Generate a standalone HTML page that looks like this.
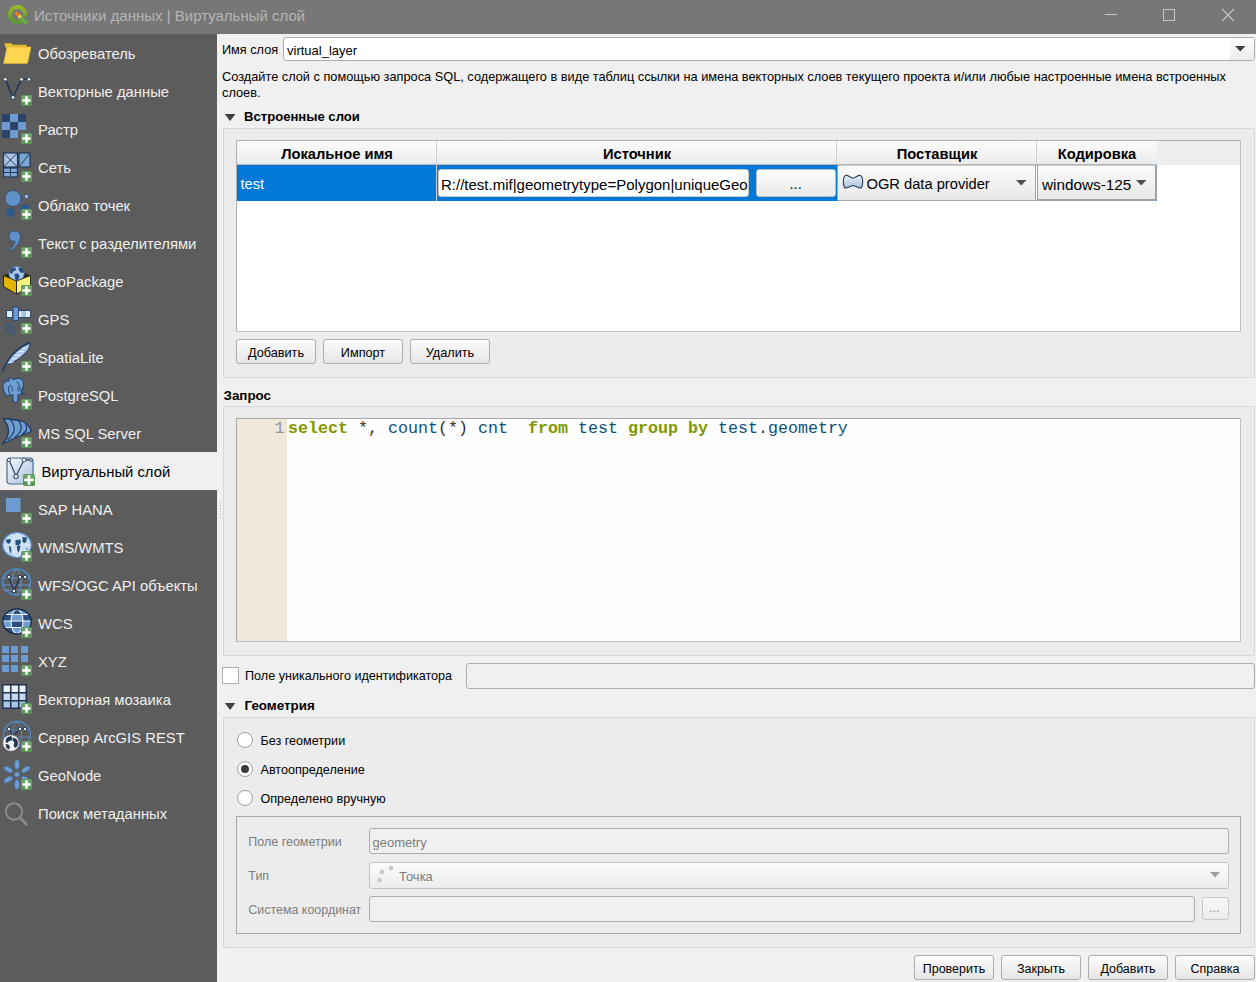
<!DOCTYPE html><html><head><meta charset="utf-8"><style>
html,body{margin:0;padding:0;width:1256px;height:982px;overflow:hidden;background:#f0f0f0;position:relative;font-family:"Liberation Sans",sans-serif;}
.t{position:absolute;white-space:nowrap;}
svg{position:absolute;}
</style></head><body>
<div style="position:absolute;left:0px;top:0px;width:1256px;height:34px;box-sizing:border-box;background:#777777"></div>
<svg style="left:0px;top:0px" width="34" height="34" viewBox="0 0 34 34"><defs><linearGradient id="qg" x1="0" y1="0" x2="0" y2="1"><stop offset="0" stop-color="#93b823"/><stop offset="1" stop-color="#5a9a30"/></linearGradient></defs><path d="M21.4 21.2A7.6 7.6 0 1 1 24.9 16.6" fill="none" stroke="url(#qg)" stroke-width="3.9"/><path d="M20.2 17L25.8 22.6" stroke="#6aac48" stroke-width="3.6" stroke-linecap="round"/><path d="M16.6 13.4L19.2 16" stroke="#f07a1c" stroke-width="3.4" stroke-linecap="round"/><path d="M18.9 15.7L20.6 17.4" stroke="#e4de50" stroke-width="3.4"/></svg>
<div class="t" style="left:34px;top:7.60px;font-size:15px;line-height:15px;color:#b4b4b4;font-family:'Liberation Sans', sans-serif;">Источники данных | Виртуальный слой</div>
<div style="position:absolute;left:1105px;top:14px;width:12px;height:1px;box-sizing:border-box;background:#c8c8c8"></div>
<div style="position:absolute;left:1163px;top:9px;width:12px;height:12px;box-sizing:border-box;border:1px solid #c8c8c8"></div>
<svg style="left:1221px;top:8px" width="14" height="14" viewBox="0 0 14 14"><path d="M1 1L13 13M13 1L1 13" stroke="#c8c8c8" stroke-width="1.1"/></svg>
<div style="position:absolute;left:0px;top:34px;width:217px;height:948px;box-sizing:border-box;background:#5c5c5c"></div>
<svg style="left:0px;top:34px" width="34" height="38" viewBox="0 0 34 38"><path d="M4.5 9.5h7l1.5 1.5h13.5v3H6z" fill="#e9c23e" stroke="#d4a92c" stroke-width=".6"/><path d="M7 13h24l-3.5 16.5H3.5z" fill="#fdd64f"/><path d="M7 13h24l-3.5 16.5H3.5z" fill="none" stroke="#dcb034" stroke-width=".6"/></svg>
<div class="t" style="left:38px;top:47.07px;font-size:14.8px;line-height:14.8px;color:#efefef;font-family:'Liberation Sans', sans-serif;">Обозреватель</div>
<svg style="left:0px;top:72px" width="34" height="38" viewBox="0 0 34 38"><path d="M5.3 7.3L13 25.3L21.5 7.3L29 7.3" fill="none" stroke="#223858" stroke-width="1.6"/><circle cx="5.3" cy="7.3" r="1.8" fill="#fff" stroke="#223858" stroke-width=".8"/><circle cx="21.5" cy="7.3" r="1.8" fill="#fff" stroke="#223858" stroke-width=".8"/><circle cx="29" cy="7.3" r="1.8" fill="#fff" stroke="#223858" stroke-width=".8"/><circle cx="13" cy="25.3" r="1.8" fill="#fff" stroke="#223858" stroke-width=".8"/><rect x="21" y="23" width="11" height="11" rx="1.6" fill="#5a9558"/><rect x="21.5" y="23.5" width="10" height="4" rx="1" fill="#6aa468"/><path d="M26.5 24.3v8.4M22.3 28.5h8.4" stroke="#fff" stroke-width="2.5"/></svg>
<div class="t" style="left:38px;top:85.07px;font-size:14.8px;line-height:14.8px;color:#efefef;font-family:'Liberation Sans', sans-serif;">Векторные данные</div>
<svg style="left:0px;top:110px" width="34" height="38" viewBox="0 0 34 38"><rect x="2" y="4" width="24" height="24" fill="#6b9bd0"/><rect x="2" y="4" width="8" height="8" fill="#2b4466"/><rect x="18" y="4" width="8" height="8" fill="#2b4466"/><rect x="10" y="12" width="8" height="8" fill="#2b4466"/><rect x="2" y="20" width="8" height="8" fill="#2b4466"/><rect x="18" y="20" width="8" height="8" fill="#5c5c5c"/><rect x="21" y="23" width="11" height="11" rx="1.6" fill="#5a9558"/><rect x="21.5" y="23.5" width="10" height="4" rx="1" fill="#6aa468"/><path d="M26.5 24.3v8.4M22.3 28.5h8.4" stroke="#fff" stroke-width="2.5"/></svg>
<div class="t" style="left:38px;top:123.07px;font-size:14.8px;line-height:14.8px;color:#efefef;font-family:'Liberation Sans', sans-serif;">Растр</div>
<svg style="left:0px;top:148px" width="34" height="38" viewBox="0 0 34 38"><rect x="3.5" y="5" width="14" height="14" fill="#a9c6e8" stroke="#223858" stroke-width="1.2"/><path d="M3.5 5l14 14M17.5 5l-14 14" stroke="#223858" stroke-width="1"/><rect x="19" y="5" width="11" height="14" fill="#7aa6d8" stroke="#223858" stroke-width="1.2"/><path d="M30 5L19 19" stroke="#223858"/><rect x="3.5" y="20" width="14" height="9" fill="#7aa6d8" stroke="#223858" stroke-width="1.2"/><path d="M10.5 20v9M3.5 24.5h14" stroke="#223858" stroke-width="1"/><rect x="21" y="23" width="11" height="11" rx="1.6" fill="#5a9558"/><rect x="21.5" y="23.5" width="10" height="4" rx="1" fill="#6aa468"/><path d="M26.5 24.3v8.4M22.3 28.5h8.4" stroke="#fff" stroke-width="2.5"/></svg>
<div class="t" style="left:38px;top:161.07px;font-size:14.8px;line-height:14.8px;color:#efefef;font-family:'Liberation Sans', sans-serif;">Сеть</div>
<svg style="left:0px;top:186px" width="34" height="38" viewBox="0 0 34 38"><circle cx="13" cy="12.5" r="8" fill="#5f90c8" stroke="#2b4a72" stroke-width=".8"/><circle cx="26.5" cy="10.5" r="2.2" fill="#9bbce0" stroke="#2b4a72" stroke-width=".8"/><circle cx="10.5" cy="26.5" r="4.5" fill="#2e5a8a"/><circle cx="25" cy="23" r="4.8" fill="#2e5a8a"/><rect x="21" y="23" width="11" height="11" rx="1.6" fill="#5a9558"/><rect x="21.5" y="23.5" width="10" height="4" rx="1" fill="#6aa468"/><path d="M26.5 24.3v8.4M22.3 28.5h8.4" stroke="#fff" stroke-width="2.5"/></svg>
<div class="t" style="left:38px;top:199.07px;font-size:14.8px;line-height:14.8px;color:#efefef;font-family:'Liberation Sans', sans-serif;">Облако точек</div>
<svg style="left:0px;top:224px" width="34" height="38" viewBox="0 0 34 38"><path d="M14 7c5 0 7 3 6 8c-1 6-6 10-10 12l-1-1c3-2 6-5 6-9c-3 1-6-1-6-4c0-3 2-6 5-6z" fill="#5f90c8" stroke="#2b4a72" stroke-width=".7"/><rect x="21" y="23" width="11" height="11" rx="1.6" fill="#5a9558"/><rect x="21.5" y="23.5" width="10" height="4" rx="1" fill="#6aa468"/><path d="M26.5 24.3v8.4M22.3 28.5h8.4" stroke="#fff" stroke-width="2.5"/></svg>
<div class="t" style="left:38px;top:237.07px;font-size:14.8px;line-height:14.8px;color:#efefef;font-family:'Liberation Sans', sans-serif;">Текст с разделителями</div>
<svg style="left:0px;top:262px" width="34" height="38" viewBox="0 0 34 38"><path d="M3.5 13.5L16.5 8L30.5 13.5L16.5 19z" fill="#2a2a10"/><circle cx="16.5" cy="12" r="7.6" fill="#a6c6ea" stroke="#4a7ab8" stroke-width=".8"/><g fill="#23507f"><path d="M10 8l3-2.5 3 .5-.5 2.5-2.5 1-1 2.5-2-1z"/><path d="M14.5 12l3-.5 2 2-1 4-2.5 1.5-1-3z"/><path d="M18.5 5.5l3 .5 2.5 3-1 2-2.5-.5-1.5-2z"/></g><path d="M3.5 13.5L16.5 19v13L3.5 24.5z" fill="#e3b400" stroke="#1a1a1a" stroke-width=".9"/><path d="M16.5 19L30.5 13.5v11L16.5 32z" fill="#f9f17e" stroke="#1a1a1a" stroke-width=".9"/><rect x="21" y="23" width="11" height="11" rx="1.6" fill="#5a9558"/><rect x="21.5" y="23.5" width="10" height="4" rx="1" fill="#6aa468"/><path d="M26.5 24.3v8.4M22.3 28.5h8.4" stroke="#fff" stroke-width="2.5"/></svg>
<div class="t" style="left:38px;top:275.07px;font-size:14.8px;line-height:14.8px;color:#efefef;font-family:'Liberation Sans', sans-serif;">GeoPackage</div>
<svg style="left:0px;top:300px" width="34" height="38" viewBox="0 0 34 38"><rect x="6.5" y="10.5" width="6" height="7" fill="#e4ecf6" stroke="#2b4a72" stroke-width="1"/><rect x="17.5" y="10.5" width="13" height="7" fill="#e4ecf6" stroke="#2b4a72" stroke-width="1"/><rect x="21" y="11" width="5" height="6" fill="#a8c6e8"/><rect x="13" y="7" width="5.5" height="13.5" fill="#6b9bd0" stroke="#2b4a72" stroke-width="1"/><path d="M15.5 20.5v3M15.5 28a5 5 0 0 1-5-5M15.5 31a8 8 0 0 1-8-8M15.5 34a11 11 0 0 1-11-11" fill="none" stroke="#2f5688" stroke-width="1.1"/><rect x="21" y="23" width="11" height="11" rx="1.6" fill="#5a9558"/><rect x="21.5" y="23.5" width="10" height="4" rx="1" fill="#6aa468"/><path d="M26.5 24.3v8.4M22.3 28.5h8.4" stroke="#fff" stroke-width="2.5"/></svg>
<div class="t" style="left:38px;top:313.07px;font-size:14.8px;line-height:14.8px;color:#efefef;font-family:'Liberation Sans', sans-serif;">GPS</div>
<svg style="left:0px;top:338px" width="34" height="38" viewBox="0 0 34 38"><path d="M6.5 26C10 17 17 9 30 4.3C30 8 29 11 27.5 12.5C23 18 17 23 7 27z" fill="#a8c6ea" stroke="#1f3a5c" stroke-width="1"/><path d="M2.5 33.3C7 22 15 11 29.5 5" fill="none" stroke="#1f3a5c" stroke-width="1.4"/><path d="M9 24.5l4.5-.5M12 21l5-.8M15 17.5l5.5-.8M18.5 14l5.5-.8M22 10.5l5-.7" stroke="#eaf2fb" stroke-width="1" fill="none"/><rect x="21" y="23" width="11" height="11" rx="1.6" fill="#5a9558"/><rect x="21.5" y="23.5" width="10" height="4" rx="1" fill="#6aa468"/><path d="M26.5 24.3v8.4M22.3 28.5h8.4" stroke="#fff" stroke-width="2.5"/></svg>
<div class="t" style="left:38px;top:351.07px;font-size:14.8px;line-height:14.8px;color:#efefef;font-family:'Liberation Sans', sans-serif;">SpatiaLite</div>
<svg style="left:0px;top:376px" width="34" height="38" viewBox="0 0 34 38"><path d="M9 5C4.5 4.5 2.5 7.5 3 11c.5 4 2.5 8 4.5 9l2-1h3.5v5c0 2 1 2.5 2.5 2.5s2.5-.5 2.5-2.5v-5l2-1h4l-3-2c1-2 2.5-5 2.5-8c0-4-2.5-5.5-5-5.5c-2 0-3.5.5-4.5 1c-1.5-1-3-1.5-5-1.5z" fill="#6d9dd2" stroke="#24466e" stroke-width="1.1"/><path d="M9.5 9.5c-1.5 3-1.5 6 .5 8.5M9.5 9.5c2-1 3 2 2.5 6M16.5 5.5c2.5 2 3.5 5 3.5 9M17.5 11c1 1.5 1 3 .5 4.5" stroke="#24466e" stroke-width="1" fill="none"/><rect x="21" y="23" width="11" height="11" rx="1.6" fill="#5a9558"/><rect x="21.5" y="23.5" width="10" height="4" rx="1" fill="#6aa468"/><path d="M26.5 24.3v8.4M22.3 28.5h8.4" stroke="#fff" stroke-width="2.5"/></svg>
<div class="t" style="left:38px;top:389.07px;font-size:14.8px;line-height:14.8px;color:#efefef;font-family:'Liberation Sans', sans-serif;">PostgreSQL</div>
<svg style="left:0px;top:414px" width="34" height="38" viewBox="0 0 34 38"><path d="M3 4.5C11 5 18 6 23 7.5C27 9 30 13 31.5 17.5C22 21 12 25 2.5 30C6 26 8.5 21 8.5 17C8.5 12 6 8 3 4.5z" fill="#6d9dd2" stroke="#1e3a5f" stroke-width="1.3" stroke-linejoin="round"/><path d="M10.5 5.5C13 9 14.5 13 14 16C13.5 20 11 23 7.5 26M18.5 6.8C20.5 9 21.5 12 21 15C20.5 18 18 21 14.5 23.5M25.5 9.2C26.5 11 27 13 26.5 15.5C26 17.5 24 19 22 20.5" stroke="#1e3a5f" stroke-width="1.2" fill="none"/><rect x="21" y="23" width="11" height="11" rx="1.6" fill="#5a9558"/><rect x="21.5" y="23.5" width="10" height="4" rx="1" fill="#6aa468"/><path d="M26.5 24.3v8.4M22.3 28.5h8.4" stroke="#fff" stroke-width="2.5"/></svg>
<div class="t" style="left:38px;top:427.07px;font-size:14.8px;line-height:14.8px;color:#efefef;font-family:'Liberation Sans', sans-serif;">MS SQL Server</div>
<div style="position:absolute;left:0px;top:452px;width:217px;height:38px;box-sizing:border-box;background:#f0f0f0"></div>
<svg style="left:0px;top:452px" width="38" height="38" viewBox="0 0 38 38"><defs><linearGradient id="sg" x1="0" y1="0" x2="1" y2="1"><stop offset="0" stop-color="#f4f8fc"/><stop offset="1" stop-color="#a9c1de"/></linearGradient></defs><rect x="7" y="6" width="26" height="26" rx="3" fill="url(#sg)" stroke="#4a6a90" stroke-width="1.2"/><path d="M9 8L16 24L24 8L31 8" fill="none" stroke="#3a5270" stroke-width="1.3"/><circle cx="16" cy="24.5" r="2.2" fill="#fff" stroke="#3a5270" stroke-width="1.1"/><circle cx="24" cy="8" r="2" fill="#fff" stroke="#3a5270" stroke-width="1"/><circle cx="9" cy="8" r="1.6" fill="#fff" stroke="#3a5270" stroke-width="1"/><circle cx="31" cy="8" r="1.4" fill="#fff" stroke="#3a5270" stroke-width="1"/><rect x="23" y="22" width="12" height="12" rx="1.8" fill="#5a9558"/><rect x="23.5" y="22.5" width="11" height="4.5" rx="1" fill="#6aa468"/><path d="M29 23.2v9.6M24.2 28h9.6" stroke="#fff" stroke-width="2.7"/></svg>
<div class="t" style="left:41.5px;top:465.07px;font-size:14.8px;line-height:14.8px;color:#000;font-family:'Liberation Sans', sans-serif;">Виртуальный слой</div>
<svg style="left:0px;top:490px" width="34" height="38" viewBox="0 0 34 38"><rect x="6" y="8" width="14.5" height="14" fill="#6b9bd0"/><path d="M2.5 4.5h21.5M2.5 25.5h21.5M2.5 4.5v21M24 4.5v21" stroke="#3b5f8a" stroke-width="1.3" stroke-dasharray="1.4 2.6" fill="none"/><rect x="21" y="23" width="11" height="11" rx="1.6" fill="#5a9558"/><rect x="21.5" y="23.5" width="10" height="4" rx="1" fill="#6aa468"/><path d="M26.5 24.3v8.4M22.3 28.5h8.4" stroke="#fff" stroke-width="2.5"/></svg>
<div class="t" style="left:38px;top:503.07px;font-size:14.8px;line-height:14.8px;color:#efefef;font-family:'Liberation Sans', sans-serif;">SAP HANA</div>
<svg style="left:0px;top:528px" width="34" height="38" viewBox="0 0 34 38"><ellipse cx="17" cy="17" rx="14.2" ry="12.3" fill="#c8dcf0" stroke="#5a90d0" stroke-width="1.3"/><path d="M6 11h22M3.5 17h27M6 23h22M17 5c-6 5-6 19 0 24M17 5c6 5 6 19 0 24" stroke="#eef4fb" stroke-width=".7" fill="none"/><g fill="#23507f"><path d="M6 11.5l4.5-.5.5 2-2 3-2.5-1.5z"/><path d="M15.5 12l5-.5.5 3-2 2.5h-3.5z"/><path d="M17 17.5h3.5l-1 5.5-1.5 1.5-1-4z"/><path d="M22.5 9l4.5.5-.5 3.5-1.5 2-2.5-1z"/><path d="M9 18l1.5.5 1 4-1.5 3.5-.5-4z"/><path d="M26 20l2 1-1 1.5z"/></g><rect x="21" y="23" width="11" height="11" rx="1.6" fill="#5a9558"/><rect x="21.5" y="23.5" width="10" height="4" rx="1" fill="#6aa468"/><path d="M26.5 24.3v8.4M22.3 28.5h8.4" stroke="#fff" stroke-width="2.5"/></svg>
<div class="t" style="left:38px;top:541.07px;font-size:14.8px;line-height:14.8px;color:#efefef;font-family:'Liberation Sans', sans-serif;">WMS/WMTS</div>
<svg style="left:0px;top:566px" width="34" height="38" viewBox="0 0 34 38"><ellipse cx="16.5" cy="16" rx="14" ry="13" fill="none" stroke="#4a88cc" stroke-width="1.6"/><path d="M3 12h27M3 19h27M3 24h27M16.5 3c-6 5-6 21 0 26M16.5 3c6 5 6 21 0 26" stroke="#6b9bd0" stroke-width=".9" fill="none"/><path d="M9 11l5 14l6-14h5" stroke="#223858" stroke-width="1.4" fill="none"/><circle cx="9" cy="11" r="1.8" fill="#fff" stroke="#223858" stroke-width="1"/><circle cx="20" cy="11" r="1.8" fill="#fff" stroke="#223858" stroke-width="1"/><circle cx="25" cy="11" r="1.8" fill="#fff" stroke="#223858" stroke-width="1"/><circle cx="14" cy="25" r="1.8" fill="#fff" stroke="#223858" stroke-width="1"/><rect x="21" y="23" width="11" height="11" rx="1.6" fill="#5a9558"/><rect x="21.5" y="23.5" width="10" height="4" rx="1" fill="#6aa468"/><path d="M26.5 24.3v8.4M22.3 28.5h8.4" stroke="#fff" stroke-width="2.5"/></svg>
<div class="t" style="left:38px;top:579.07px;font-size:14.8px;line-height:14.8px;color:#efefef;font-family:'Liberation Sans', sans-serif;">WFS/OGC API объекты</div>
<svg style="left:0px;top:604px" width="34" height="38" viewBox="0 0 34 38"><defs><clipPath id="wc"><ellipse cx="17" cy="17.5" rx="14" ry="12.2"/></clipPath><clipPath id="wi"><ellipse cx="17" cy="17.5" rx="6" ry="12.2"/></clipPath></defs><g clip-path="url(#wc)"><path d="M2 4h30v6.5H2z" fill="#6d9dd2"/><path d="M2 10.5h30V17H2z" fill="#2b5080"/><path d="M2 17h30v6.5H2z" fill="#6d9dd2"/><path d="M2 23.5h30V30H2z" fill="#2b5080"/><g clip-path="url(#wi)"><path d="M2 4h30v6.5H2z" fill="#2b5080"/><path d="M2 10.5h30V17H2z" fill="#6d9dd2"/><path d="M2 17h30v6.5H2z" fill="#2b5080"/><path d="M2 23.5h30V30H2z" fill="#6d9dd2"/></g><path d="M5.5 10.5h23M3 17h28M5.5 23.5h23" stroke="#f2f5f8" stroke-width="1.2"/></g><ellipse cx="17" cy="17.5" rx="6" ry="12" fill="none" stroke="#f2f5f8" stroke-width="1.1"/><ellipse cx="17" cy="17.5" rx="14.3" ry="12.5" fill="none" stroke="#172a44" stroke-width="1.3"/><rect x="21" y="23" width="11" height="11" rx="1.6" fill="#5a9558"/><rect x="21.5" y="23.5" width="10" height="4" rx="1" fill="#6aa468"/><path d="M26.5 24.3v8.4M22.3 28.5h8.4" stroke="#fff" stroke-width="2.5"/></svg>
<div class="t" style="left:38px;top:617.07px;font-size:14.8px;line-height:14.8px;color:#efefef;font-family:'Liberation Sans', sans-serif;">WCS</div>
<svg style="left:0px;top:642px" width="34" height="38" viewBox="0 0 34 38"><g fill="#6b9bd0"><rect x="2" y="4" width="7" height="7"/><rect x="11" y="4" width="7" height="7"/><rect x="21" y="4" width="7" height="7"/><rect x="2" y="13" width="7" height="7"/><rect x="11" y="13" width="7" height="7"/><rect x="21" y="13" width="7" height="7"/><rect x="2" y="23" width="7" height="7"/><rect x="11" y="23" width="7" height="7"/></g><rect x="21" y="23" width="11" height="11" rx="1.6" fill="#5a9558"/><rect x="21.5" y="23.5" width="10" height="4" rx="1" fill="#6aa468"/><path d="M26.5 24.3v8.4M22.3 28.5h8.4" stroke="#fff" stroke-width="2.5"/></svg>
<div class="t" style="left:38px;top:655.07px;font-size:14.8px;line-height:14.8px;color:#efefef;font-family:'Liberation Sans', sans-serif;">XYZ</div>
<svg style="left:0px;top:680px" width="34" height="38" viewBox="0 0 34 38"><rect x="2" y="4" width="25" height="25" fill="#1e3350"/><g fill="#eef2f7"><rect x="3.5" y="5.5" width="6.5" height="6.5"/><rect x="11.5" y="5.5" width="6.5" height="6.5"/><rect x="19.5" y="5.5" width="6" height="6.5"/></g><g fill="#c8d8ec"><rect x="3.5" y="13.5" width="6.5" height="6.5"/><rect x="11.5" y="13.5" width="6.5" height="6.5"/><rect x="19.5" y="13.5" width="6" height="6.5"/></g><g fill="#a8c4e6"><rect x="3.5" y="21.5" width="6.5" height="6"/><rect x="11.5" y="21.5" width="6.5" height="6"/><rect x="19.5" y="21.5" width="6" height="6"/></g><rect x="21" y="23" width="11" height="11" rx="1.6" fill="#5a9558"/><rect x="21.5" y="23.5" width="10" height="4" rx="1" fill="#6aa468"/><path d="M26.5 24.3v8.4M22.3 28.5h8.4" stroke="#fff" stroke-width="2.5"/></svg>
<div class="t" style="left:38px;top:693.07px;font-size:14.8px;line-height:14.8px;color:#efefef;font-family:'Liberation Sans', sans-serif;">Векторная мозаика</div>
<svg style="left:0px;top:718px" width="34" height="38" viewBox="0 0 34 38"><ellipse cx="17" cy="16" rx="13.5" ry="12.5" fill="none" stroke="#4a88cc" stroke-width="1.3"/><path d="M4 12h26M4 19h26M17 3.5c-6 5-6 20 0 25M17 3.5c6 5 6 20 0 25" stroke="#5f8fc8" stroke-width=".8" fill="none"/><path d="M9 11l4 7l7-7h5" stroke="#223858" stroke-width="1.3" fill="none"/><circle cx="9" cy="11" r="1.7" fill="#fff" stroke="#223858" stroke-width=".9"/><circle cx="20" cy="11" r="1.7" fill="#fff" stroke="#223858" stroke-width=".9"/><circle cx="25" cy="11" r="1.7" fill="#fff" stroke="#223858" stroke-width=".9"/><circle cx="11" cy="25" r="7.8" fill="#f4f4f4" stroke="#d8d8d8" stroke-width="1" stroke-dasharray="1.2 .6"/><g fill="#1f3550"><path d="M8 19l3-1 1.5 2-1 2.5-2.5.5-1.5 2-2-1 .5-3z"/><path d="M13 19.5l3.5 1.5 1.5 3-.5 4-2.5 2-1.5-2.5 1-3-2-2z"/><path d="M5.5 26l3 .5 1.5 2.5-1 2.5-2.5-1.5z"/></g><rect x="21" y="23" width="11" height="11" rx="1.6" fill="#5a9558"/><rect x="21.5" y="23.5" width="10" height="4" rx="1" fill="#6aa468"/><path d="M26.5 24.3v8.4M22.3 28.5h8.4" stroke="#fff" stroke-width="2.5"/></svg>
<div class="t" style="left:38px;top:731.07px;font-size:14.8px;line-height:14.8px;color:#efefef;font-family:'Liberation Sans', sans-serif;">Сервер ArcGIS REST</div>
<svg style="left:0px;top:756px" width="34" height="38" viewBox="0 0 34 38"><g fill="#6d9dd2" stroke="#3f6ea8" stroke-width=".6"><circle cx="17" cy="18.5" r="2.6"/><ellipse cx="17" cy="8.5" rx="2.4" ry="4.8"/><ellipse cx="17" cy="28.5" rx="2.4" ry="4.8"/><ellipse cx="8.3" cy="13.5" rx="2.4" ry="4.8" transform="rotate(-60 8.3 13.5)"/><ellipse cx="25.7" cy="13.5" rx="2.4" ry="4.8" transform="rotate(60 25.7 13.5)"/><ellipse cx="8.3" cy="23.5" rx="2.4" ry="4.8" transform="rotate(60 8.3 23.5)"/><ellipse cx="25.7" cy="23.5" rx="2.4" ry="4.8" transform="rotate(-60 25.7 23.5)"/></g><rect x="21" y="23" width="11" height="11" rx="1.6" fill="#5a9558"/><rect x="21.5" y="23.5" width="10" height="4" rx="1" fill="#6aa468"/><path d="M26.5 24.3v8.4M22.3 28.5h8.4" stroke="#fff" stroke-width="2.5"/></svg>
<div class="t" style="left:38px;top:769.07px;font-size:14.8px;line-height:14.8px;color:#efefef;font-family:'Liberation Sans', sans-serif;">GeoNode</div>
<svg style="left:0px;top:794px" width="34" height="38" viewBox="0 0 34 38"><circle cx="14" cy="17.5" r="8.2" fill="none" stroke="#8c8c8c" stroke-width="2"/><path d="M20 23.5l6.5 6.8" stroke="#8c8c8c" stroke-width="2.6" stroke-linecap="round"/></svg>
<div class="t" style="left:38px;top:807.07px;font-size:14.8px;line-height:14.8px;color:#efefef;font-family:'Liberation Sans', sans-serif;">Поиск метаданных</div>
<div style="position:absolute;left:220px;top:502px;width:1px;height:1px;box-sizing:border-box;background:#a8a8a8"></div>
<div style="position:absolute;left:220px;top:505px;width:1px;height:1px;box-sizing:border-box;background:#a8a8a8"></div>
<div style="position:absolute;left:220px;top:508px;width:1px;height:1px;box-sizing:border-box;background:#a8a8a8"></div>
<div style="position:absolute;left:220px;top:511px;width:1px;height:1px;box-sizing:border-box;background:#a8a8a8"></div>
<div style="position:absolute;left:220px;top:514px;width:1px;height:1px;box-sizing:border-box;background:#a8a8a8"></div>
<div style="position:absolute;left:220px;top:517px;width:1px;height:1px;box-sizing:border-box;background:#a8a8a8"></div>
<div class="t" style="left:222px;top:44.25px;font-size:12.7px;line-height:12.7px;color:#000;font-family:'Liberation Sans', sans-serif;">Имя слоя</div>
<div style="position:absolute;left:283px;top:37px;width:972px;height:24px;box-sizing:border-box;background:#fff;border:1px solid #adadad;border-radius:3px"></div>
<div style="position:absolute;left:1230px;top:38px;width:24px;height:22px;box-sizing:border-box;background:linear-gradient(#fdfdfd,#ececec);border-radius:0 2px 2px 0"></div>
<svg style="left:1235px;top:46px" width="11" height="6" viewBox="0 0 11 6"><path d="M0 0h10.5L5.25 5.5z" fill="#404040"/></svg>
<div class="t" style="left:287px;top:44.00px;font-size:13px;line-height:13px;color:#000;font-family:'Liberation Sans', sans-serif;">virtual_layer</div>
<div class="t" style="left:222px;top:70.69px;font-size:12.77px;line-height:12.77px;color:#000;font-family:'Liberation Sans', sans-serif;">Создайте слой с помощью запроса SQL, содержащего в виде таблиц ссылки на имена векторных слоев текущего проекта и/или любые настроенные имена встроенных</div>
<div class="t" style="left:222px;top:86.59px;font-size:12.77px;line-height:12.77px;color:#000;font-family:'Liberation Sans', sans-serif;">слоев.</div>
<svg style="left:224px;top:113px" width="12" height="9" viewBox="0 0 12 9"><path d="M0.8 1h10.6L6.1 8z" fill="#404040"/></svg>
<div class="t" style="left:244px;top:109.51px;font-size:13.1px;line-height:13.1px;color:#000;font-weight:bold;font-family:'Liberation Sans', sans-serif;">Встроенные слои</div>
<div style="position:absolute;left:223px;top:128px;width:1032px;height:250px;box-sizing:border-box;background:#ececec;border:1px solid #d6d6d6;border-radius:2px"></div>
<div style="position:absolute;left:236px;top:140px;width:1005px;height:192px;box-sizing:border-box;background:#fff;border:1px solid #b0b0b0;border-right-color:#c0c0c0;border-bottom-color:#c0c0c0"></div>
<div style="position:absolute;left:237px;top:141px;width:1003px;height:24px;box-sizing:border-box;background:#eeeeee;"></div>
<div style="position:absolute;left:237px;top:141px;width:200px;height:24px;box-sizing:border-box;background:linear-gradient(#fcfcfc,#ebebeb);border-right:1px solid #cfcfcf;border-bottom:1px solid #b8b8b8"></div>
<div class="t" style="left:237px;width:200px;top:147.36px;text-align:center;font-size:14.7px;line-height:14.7px;font-weight:bold;color:#000">Локальное имя</div>
<div style="position:absolute;left:437px;top:141px;width:400px;height:24px;box-sizing:border-box;background:linear-gradient(#fcfcfc,#ebebeb);border-right:1px solid #cfcfcf;border-bottom:1px solid #b8b8b8"></div>
<div class="t" style="left:437px;width:400px;top:147.36px;text-align:center;font-size:14.7px;line-height:14.7px;font-weight:bold;color:#000">Источник</div>
<div style="position:absolute;left:837px;top:141px;width:200px;height:24px;box-sizing:border-box;background:linear-gradient(#fcfcfc,#ebebeb);border-right:1px solid #cfcfcf;border-bottom:1px solid #b8b8b8"></div>
<div class="t" style="left:837px;width:200px;top:147.36px;text-align:center;font-size:14.7px;line-height:14.7px;font-weight:bold;color:#000">Поставщик</div>
<div style="position:absolute;left:1037px;top:141px;width:120px;height:24px;box-sizing:border-box;background:linear-gradient(#fcfcfc,#ebebeb);border-bottom:1px solid #b8b8b8"></div>
<div class="t" style="left:1037px;width:120px;top:147.36px;text-align:center;font-size:14.7px;line-height:14.7px;font-weight:bold;color:#000">Кодировка</div>
<div style="position:absolute;left:237px;top:165px;width:600px;height:36px;box-sizing:border-box;background:#0078d7"></div>
<div class="t" style="left:240.5px;top:176.86px;font-size:14.7px;line-height:14.7px;color:#fff;font-family:'Liberation Sans', sans-serif;">test</div>
<div style="position:absolute;left:436px;top:165px;width:1px;height:36px;box-sizing:border-box;background:#d0d0d0"></div>
<div style="position:absolute;left:438px;top:169px;width:311px;height:28px;box-sizing:border-box;background:#fff;border:1px solid #c8c8c8;border-radius:3px;overflow:hidden"><div class="t" style="left:2px;top:6.90px;font-size:15px;line-height:15px;color:#000">R://test.mif|geometrytype=Polygon|uniqueGeometryType=yes</div></div>
<div style="position:absolute;left:756px;top:169px;width:80px;height:28px;box-sizing:border-box;background:linear-gradient(#fdfdfd,#e9e9e9);border:1px solid #bdbdbd;border-radius:3px"></div>
<div class="t" style="left:789.5px;top:177.06px;font-size:14.7px;line-height:14.7px;color:#000;font-family:'Liberation Sans', sans-serif;">...</div>
<div style="position:absolute;left:837px;top:165px;width:199px;height:36px;box-sizing:border-box;background:linear-gradient(#fbfbfb,#e8e8e8);border:1px solid #a9a9a9;border-top-color:#c9c9c9"></div>
<svg style="left:842px;top:174px" width="22" height="16" viewBox="0 0 22 16"><defs><linearGradient id="og" x1="0" y1="0" x2="0" y2="1"><stop offset="0" stop-color="#e8f0f8"/><stop offset="1" stop-color="#a8c0dc"/></linearGradient></defs><path d="M3.5 1.5C6 .8 8 3.5 11 4.2C14 3.5 16 .8 18.5 1.5C21 2.5 21.5 10.5 19.5 13.5C17.5 15.2 14.5 12 11 11.5C7.5 12 4.5 15.2 2.5 13.5C.5 10.5 1 2.5 3.5 1.5z" fill="url(#og)" stroke="#2b3f5c" stroke-width="1.1"/></svg>
<div class="t" style="left:866.5px;top:177.06px;font-size:14.7px;line-height:14.7px;color:#000;font-family:'Liberation Sans', sans-serif;">OGR data provider</div>
<svg style="left:1016px;top:180px" width="11" height="6" viewBox="0 0 11 6"><path d="M0 0h10.5L5.25 5.5z" fill="#505050"/></svg>
<div style="position:absolute;left:1037px;top:165px;width:120px;height:36px;box-sizing:border-box;background:linear-gradient(#fbfbfb,#e8e8e8);border:1px solid #a0a0a0;border-width:1px 2px 2px 1px;border-top-color:#c9c9c9"></div>
<div style="position:absolute;left:1156px;top:165px;width:1px;height:1px;box-sizing:border-box;background:#3a8ee6"></div>
<div style="position:absolute;left:1156px;top:200px;width:1px;height:1px;box-sizing:border-box;background:#3a8ee6"></div>
<div style="position:absolute;left:1037px;top:165px;width:1px;height:1px;box-sizing:border-box;background:#3a8ee6"></div>
<div style="position:absolute;left:1037px;top:200px;width:1px;height:1px;box-sizing:border-box;background:#3a8ee6"></div>
<div style="position:absolute;left:837px;top:165px;width:1px;height:1px;box-sizing:border-box;background:#3a8ee6"></div>
<div style="position:absolute;left:837px;top:200px;width:1px;height:1px;box-sizing:border-box;background:#3a8ee6"></div>
<div style="position:absolute;left:1035px;top:165px;width:1px;height:1px;box-sizing:border-box;background:#3a8ee6"></div>
<div style="position:absolute;left:1035px;top:200px;width:1px;height:1px;box-sizing:border-box;background:#3a8ee6"></div>
<div class="t" style="left:1042px;top:176.55px;font-size:15.3px;line-height:15.3px;color:#000;font-family:'Liberation Sans', sans-serif;">windows-125</div>
<svg style="left:1136px;top:180px" width="11" height="6" viewBox="0 0 11 6"><path d="M0 0h10.5L5.25 5.5z" fill="#505050"/></svg>
<div style="position:absolute;left:236px;top:339px;width:80px;height:25px;box-sizing:border-box;background:linear-gradient(#fcfcfc,#e6e6e6);border:1px solid #adadad;border-radius:3px"></div><div class="t" style="left:236px;width:80px;top:346.55px;text-align:center;font-size:12.7px;line-height:12.7px;color:#000">Добавить</div>
<div style="position:absolute;left:323px;top:339px;width:80px;height:25px;box-sizing:border-box;background:linear-gradient(#fcfcfc,#e6e6e6);border:1px solid #adadad;border-radius:3px"></div><div class="t" style="left:323px;width:80px;top:346.55px;text-align:center;font-size:12.7px;line-height:12.7px;color:#000">Импорт</div>
<div style="position:absolute;left:410px;top:339px;width:80px;height:25px;box-sizing:border-box;background:linear-gradient(#fcfcfc,#e6e6e6);border:1px solid #adadad;border-radius:3px"></div><div class="t" style="left:410px;width:80px;top:346.55px;text-align:center;font-size:12.7px;line-height:12.7px;color:#000">Удалить</div>
<div class="t" style="left:223.5px;top:389.26px;font-size:13.4px;line-height:13.4px;color:#000;font-weight:bold;font-family:'Liberation Sans', sans-serif;">Запрос</div>
<div style="position:absolute;left:223px;top:406px;width:1032px;height:250px;box-sizing:border-box;background:#ececec;border:1px solid #d6d6d6;border-radius:2px"></div>
<div style="position:absolute;left:236px;top:418px;width:1005px;height:224px;box-sizing:border-box;background:#fefefe;border:1px solid #a8a8a8;border-right-color:#c0c0c0;border-bottom-color:#c0c0c0"></div>
<div style="position:absolute;left:237px;top:419px;width:50px;height:222px;box-sizing:border-box;background:#efe8d9"></div>
<div class="t" style="left:274.5px;top:421.19px;font-size:16.67px;line-height:16.67px;color:#8c98a4;font-family:'Liberation Mono', monospace;">1</div>
<div class="t" style="left:288px;top:421.19px;font-size:16.67px;line-height:16.67px;font-family:'Liberation Mono', monospace;white-space:pre"><span style="color:#7f9800;font-weight:bold">select</span> <span style="color:#333333">*,</span> <span style="color:#0d5178">count</span><span style="color:#333333">(*)</span> <span style="color:#0d5178">cnt</span>  <span style="color:#7f9800;font-weight:bold">from</span> <span style="color:#0d5178">test</span> <span style="color:#7f9800;font-weight:bold">group</span> <span style="color:#7f9800;font-weight:bold">by</span> <span style="color:#0d5178">test</span><span style="color:#333333">.</span><span style="color:#0d5178">geometry</span></div>
<div style="position:absolute;left:222px;top:667px;width:17px;height:17px;box-sizing:border-box;background:#fff;border:1px solid #adadad;"></div>
<div class="t" style="left:245px;top:670.33px;font-size:12.6px;line-height:12.6px;color:#000;font-family:'Liberation Sans', sans-serif;">Поле уникального идентификатора</div>
<div style="position:absolute;left:466px;top:663px;width:789px;height:26px;box-sizing:border-box;background:#f0f0f0;border:1px solid #adadad;border-radius:3px"></div>
<svg style="left:224px;top:702px" width="12" height="9" viewBox="0 0 12 9"><path d="M0.8 1h10.6L6.1 8z" fill="#404040"/></svg>
<div class="t" style="left:244.5px;top:698.66px;font-size:13.4px;line-height:13.4px;color:#000;font-weight:bold;font-family:'Liberation Sans', sans-serif;">Геометрия</div>
<div style="position:absolute;left:223px;top:717px;width:1032px;height:231px;box-sizing:border-box;background:#ececec;border:1px solid #d6d6d6;border-radius:2px"></div>
<svg style="left:236px;top:731px" width="18" height="18" viewBox="0 0 18 18"><circle cx="9" cy="9" r="7.5" fill="#fff" stroke="#a0a0a0" stroke-width="1"/></svg>
<div class="t" style="left:260.5px;top:734.53px;font-size:12.6px;line-height:12.6px;color:#000;font-family:'Liberation Sans', sans-serif;">Без геометрии</div>
<svg style="left:236px;top:760px" width="18" height="18" viewBox="0 0 18 18"><circle cx="9" cy="9" r="7.5" fill="#fff" stroke="#a0a0a0" stroke-width="1"/><circle cx="9" cy="9" r="4" fill="#3a3a3a"/></svg>
<div class="t" style="left:260.5px;top:763.53px;font-size:12.6px;line-height:12.6px;color:#000;font-family:'Liberation Sans', sans-serif;">Автоопределение</div>
<svg style="left:236px;top:789px" width="18" height="18" viewBox="0 0 18 18"><circle cx="9" cy="9" r="7.5" fill="#fff" stroke="#a0a0a0" stroke-width="1"/></svg>
<div class="t" style="left:260.5px;top:792.53px;font-size:12.6px;line-height:12.6px;color:#000;font-family:'Liberation Sans', sans-serif;">Определено вручную</div>
<div style="position:absolute;left:236px;top:816px;width:1005px;height:118px;box-sizing:border-box;border:1px solid #a8a8a8;"></div>
<div class="t" style="left:248.3px;top:835.92px;font-size:12.5px;line-height:12.5px;color:#7d7d7d;font-family:'Liberation Sans', sans-serif;">Поле геометрии</div>
<div style="position:absolute;left:369px;top:828px;width:860px;height:26px;box-sizing:border-box;background:#f0f0f0;border:1px solid #adadad;border-radius:3px"></div>
<div class="t" style="left:372.5px;top:835.50px;font-size:13px;line-height:13px;color:#7d7d7d;font-family:'Liberation Sans', sans-serif;">geometry</div>
<div class="t" style="left:248.3px;top:869.92px;font-size:12.5px;line-height:12.5px;color:#7d7d7d;font-family:'Liberation Sans', sans-serif;">Тип</div>
<div style="position:absolute;left:369px;top:862px;width:860px;height:27px;box-sizing:border-box;background:linear-gradient(#fbfbfb,#ececec);border:1px solid #c4c4c4;border-radius:3px"></div>
<svg style="left:370px;top:860px" width="30" height="30" viewBox="0 0 30 30"><g fill="#d0d0d0" stroke="#b4b4b4" stroke-width=".8"><circle cx="21" cy="8" r="1.8"/><circle cx="12" cy="12" r="1.8"/><circle cx="9.5" cy="20" r="1.8"/></g></svg>
<div class="t" style="left:399px;top:869.50px;font-size:13px;line-height:13px;color:#7d7d7d;font-family:'Liberation Sans', sans-serif;">Точка</div>
<svg style="left:1210px;top:872px" width="11" height="6" viewBox="0 0 11 6"><path d="M0 0h10L5 5.5z" fill="#a0a0a0"/></svg>
<div class="t" style="left:248.3px;top:903.96px;font-size:12.45px;line-height:12.45px;color:#7d7d7d;font-family:'Liberation Sans', sans-serif;">Система координат</div>
<div style="position:absolute;left:369px;top:896px;width:826px;height:26px;box-sizing:border-box;background:#f0f0f0;border:1px solid #adadad;border-radius:3px"></div>
<div style="position:absolute;left:1202px;top:897px;width:27px;height:23px;box-sizing:border-box;background:linear-gradient(#f8f8f8,#ececec);border:1px solid #c8c8c8;border-radius:3px"></div>
<div class="t" style="left:1209px;top:902.25px;font-size:12.7px;line-height:12.7px;color:#909090;font-family:'Liberation Sans', sans-serif;">...</div>
<div style="position:absolute;left:914px;top:955px;width:80px;height:25px;box-sizing:border-box;background:linear-gradient(#fcfcfc,#e6e6e6);border:1px solid #adadad;border-radius:3px"></div><div class="t" style="left:914px;width:80px;top:962.72px;text-align:center;font-size:12.5px;line-height:12.5px;color:#000">Проверить</div>
<div style="position:absolute;left:1001px;top:955px;width:80px;height:25px;box-sizing:border-box;background:linear-gradient(#fcfcfc,#e6e6e6);border:1px solid #adadad;border-radius:3px"></div><div class="t" style="left:1001px;width:80px;top:962.72px;text-align:center;font-size:12.5px;line-height:12.5px;color:#000">Закрыть</div>
<div style="position:absolute;left:1088px;top:955px;width:80px;height:25px;box-sizing:border-box;background:linear-gradient(#fcfcfc,#e6e6e6);border:1px solid #adadad;border-radius:3px"></div><div class="t" style="left:1088px;width:80px;top:962.72px;text-align:center;font-size:12.5px;line-height:12.5px;color:#000">Добавить</div>
<div style="position:absolute;left:1175px;top:955px;width:80px;height:25px;box-sizing:border-box;background:linear-gradient(#fcfcfc,#e6e6e6);border:1px solid #adadad;border-radius:3px"></div><div class="t" style="left:1175px;width:80px;top:962.72px;text-align:center;font-size:12.5px;line-height:12.5px;color:#000">Справка</div>
</body></html>
